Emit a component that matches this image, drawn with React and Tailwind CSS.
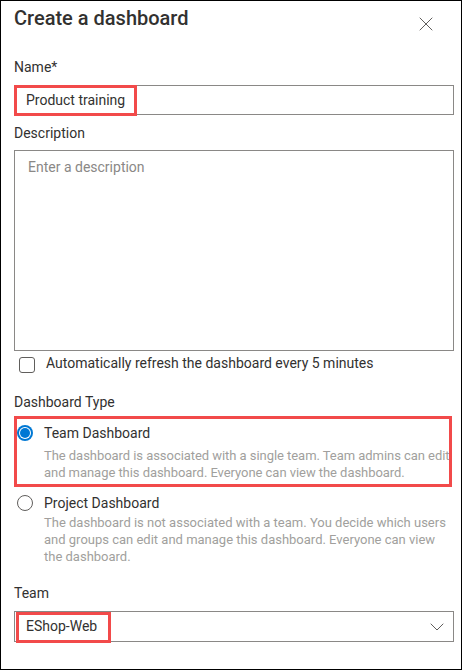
import { X, ChevronDown } from 'lucide-react';

const font = "font-['Roboto',sans-serif]";

function Highlight({ className }) {
  return <div className={`pointer-events-none absolute border-[3px] border-[#f24a4a] ${className}`} />;
}

function Radio({ checked }) {
  return checked ? (
    <span className="mt-[2px] flex h-4 w-4 shrink-0 items-center justify-center rounded-full bg-[#0078d4]">
      <span className="flex h-[12px] w-[12px] items-center justify-center rounded-full bg-white">
        <span className="h-[10px] w-[10px] rounded-full bg-[#0078d4]" />
      </span>
    </span>
  ) : (
    <span className="mt-[2px] h-4 w-4 shrink-0 rounded-full border border-[#605e5c] bg-white" />
  );
}

export default function App() {
  return (
    <div className={`${font} relative h-[670px] w-[462px] border border-black bg-white pl-[13px] text-[#323130]`}>
      {/* Header */}
      <div className="mt-[3px] flex items-start justify-between pr-[23px]">
        <h1 className="text-[20px] leading-[28px] font-medium">Create a dashboard</h1>
        <X size={24} strokeWidth={1} className="mt-[8px] text-[#605e5c]" />
      </div>

      {/* Name */}
      <div className="mt-[21px] text-[14px] leading-[20px]">Name*</div>
      <div className="relative mt-[8px] h-[30px] w-[440px] border border-[#8a8886] px-[11px] text-[14px] leading-[28px]">
        Product training
        <Highlight className="-left-px -top-px h-[31px] w-[123px]" />
      </div>

      {/* Description */}
      <div className="mt-[8px] text-[14px] leading-[20px]">Description</div>
      <div className="mt-[7px] h-[201px] w-[440px] border border-[#8a8886] px-[13px] pt-[6px] text-[14px] leading-[20px] text-[#8a8886]">
        Enter a description
      </div>

      {/* Auto refresh */}
      <div className="mt-[2px] flex items-start gap-[11px] pl-[5px] text-[14px] leading-[20px]">
        <span className="mt-[4px] h-4 w-4 shrink-0 rounded-[3px] border border-[#605e5c]" />
        <span>Automatically refresh the dashboard every 5 minutes</span>
      </div>

      {/* Dashboard type */}
      <div className="mt-[19px] text-[14px] leading-[20px]">Dashboard Type</div>

      <div className="relative mt-[4px] w-[438px] pb-[6px] pt-[7px]">
        <div className="flex items-start gap-[11px] pl-[3px]">
          <Radio checked />
          <div className="w-[414px] shrink-0">
            <div className="text-[14px] leading-[20px]">Team Dashboard</div>
            <div className="mt-[4px] text-[13px] leading-[17px] tracking-[-0.05px] text-[#a19f9d]">
              The dashboard is associated with a single team. Team admins can edit and manage this dashboard. Everyone can view the dashboard.
            </div>
          </div>
        </div>
        <Highlight className="inset-0" />
      </div>

      <div className="mt-[6px] flex items-start gap-[11px] pl-[3px]">
        <Radio />
        <div className="w-[412px]">
          <div className="text-[14px] leading-[20px]">Project Dashboard</div>
          <div className="mt-[1px] text-[13px] leading-[17px] text-[#a19f9d]">
            The dashboard is not associated with a team. You decide which users and groups can edit and manage this dashboard. Everyone can view the dashboard.
          </div>
        </div>
      </div>

      {/* Team */}
      <div className="mt-[18px] text-[14px] leading-[20px]">Team</div>
      <div className="relative mt-[8px] flex h-[31px] w-[440px] items-center justify-between border border-[#8a8886] pl-[11px] pr-[4px] text-[14px]">
        <span>EShop-Web</span>
        <ChevronDown size={24} strokeWidth={1} className="text-[#605e5c]" />
        <Highlight className="left-[1px] top-0 h-[31px] w-[95px]" />
      </div>
    </div>
  );
}
